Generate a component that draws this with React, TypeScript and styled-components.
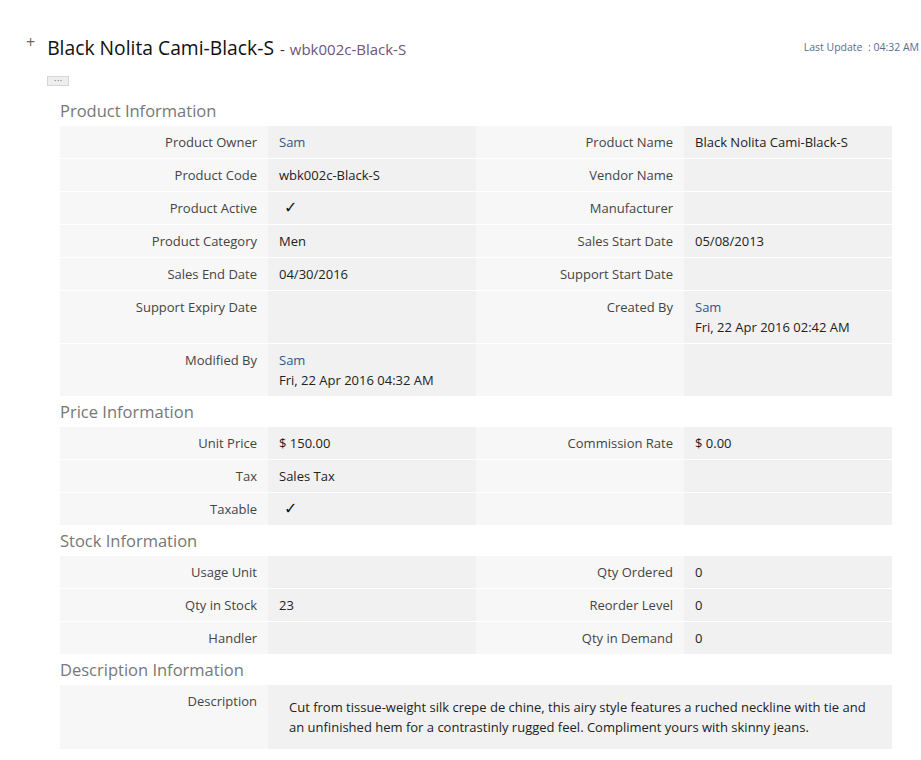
import React from 'react';
import styled, { createGlobalStyle } from 'styled-components';

const GlobalStyle = createGlobalStyle`
  body {
    margin: 0;
    background: #fff;
    font-family: "Open Sans", "Liberation Sans", sans-serif;
    color: #222;
    overflow-x: hidden;
  }
`;

const Page = styled.div`
  padding: 33px 0 10px 0;
`;

const Header = styled.div`
  display: flex;
  align-items: flex-start;
  justify-content: space-between;
  padding-left: 26px;
`;

const TitleBlock = styled.div`
  display: flex;
  align-items: flex-start;
  gap: 12px;
`;

const Plus = styled.span`
  font-size: 16px;
  line-height: 16px;
  color: #666;
  margin-top: 1px;
`;

const TitleLine = styled.div`
  display: flex;
  align-items: baseline;
  gap: 6px;
  line-height: 30px;
`;

const Title = styled.h1`
  margin: 0;
  font-size: 19.3px;
  font-weight: 400;
  color: #111;
`;

const SubTitle = styled.span`
  font-size: 15px;
  color: #6e5579;
`;

const Dash = styled.span`
  color: #333;
  margin-right: 5px;
`;

const MoreButton = styled.button`
  display: flex;
  align-items: center;
  justify-content: center;
  width: 22px;
  height: 10px;
  margin-top: 12px;
  padding: 0;
  border: 1px solid #d6d6d6;
  background: #eeeeee;
  color: #777;
  font-size: 9px;
  line-height: 1;
  font-family: "DejaVu Sans", sans-serif;
  overflow: hidden;
`;

const LastUpdate = styled.div`
  font-size: 10.5px;
  color: #5a6c8e;
  margin-top: 7px;
  margin-right: 2px;
  white-space: pre;
`;

const Content = styled.div`
  margin: 10px 0 0 60px;
  width: 832px;
`;

const SectionTitle = styled.h2`
  margin: 0;
  font-size: 16.5px;
  font-weight: 400;
  line-height: 30px;
  color: #777;
`;

const Grid = styled.div`
  display: grid;
  grid-template-columns: 208px 208px 208px 208px;
`;

const Label = styled.div`
  background: #f7f7f7;
  border-bottom: 1px solid #fff;
  padding: 6px 11px;
  font-size: 13px;
  line-height: 20px;
  color: #444;
  text-align: right;
`;

const Value = styled.div<{ $wide?: boolean }>`
  background: #f1f1f1;
  border-bottom: 1px solid #fff;
  padding: ${p => (p.$wide ? '12px 21px' : '6px 11px')};
  font-size: 13px;
  line-height: 20px;
  color: #222;
  grid-column: ${p => (p.$wide ? 'span 3' : 'auto')};
`;

const LinkText = styled.span`
  color: #2f5587;
`;

const Check = styled.span`
  font-family: "DejaVu Sans", sans-serif;
  font-size: 16px;
  padding-left: 5px;
  color: #111;
`;

type Cell = React.ReactNode;
type Row = [string, Cell, string, Cell];

const check = <Check>✓</Check>;
const sam = <LinkText>Sam</LinkText>;

const sections: { title: string; rows: Row[] }[] = [
  {
    title: 'Product Information',
    rows: [
      ['Product Owner', sam, 'Product Name', 'Black Nolita Cami-Black-S'],
      ['Product Code', 'wbk002c-Black-S', 'Vendor Name', ''],
      ['Product Active', check, 'Manufacturer', ''],
      ['Product Category', 'Men', 'Sales Start Date', '05/08/2013'],
      ['Sales End Date', '04/30/2016', 'Support Start Date', ''],
      [
        'Support Expiry Date',
        '',
        'Created By',
        <>
          {sam}
          <br />
          Fri, 22 Apr 2016 02:42 AM
        </>,
      ],
      [
        'Modified By',
        <>
          {sam}
          <br />
          Fri, 22 Apr 2016 04:32 AM
        </>,
        '',
        '',
      ],
    ],
  },
  {
    title: 'Price Information',
    rows: [
      ['Unit Price', '$ 150.00', 'Commission Rate', '$ 0.00'],
      ['Tax', 'Sales Tax', '', ''],
      ['Taxable', check, '', ''],
    ],
  },
  {
    title: 'Stock Information',
    rows: [
      ['Usage Unit', '', 'Qty Ordered', '0'],
      ['Qty in Stock', '23', 'Reorder Level', '0'],
      ['Handler', '', 'Qty in Demand', '0'],
    ],
  },
];

export default function App() {
  return (
    <Page>
      <GlobalStyle />
      <Header>
        <TitleBlock>
          <Plus>+</Plus>
          <div>
            <TitleLine>
              <Title>Black Nolita Cami-Black-S</Title>
              <SubTitle>
                <Dash>-</Dash>wbk002c-Black-S
              </SubTitle>
            </TitleLine>
            <MoreButton>···</MoreButton>
          </div>
        </TitleBlock>
        <LastUpdate>Last Update  : 04:32 AM</LastUpdate>
      </Header>

      <Content>
        {sections.map(section => (
          <div key={section.title}>
            <SectionTitle>{section.title}</SectionTitle>
            <Grid>
              {section.rows.map((row, i) => (
                <React.Fragment key={i}>
                  <Label>{row[0]}</Label>
                  <Value>{row[1]}</Value>
                  <Label>{row[2]}</Label>
                  <Value>{row[3]}</Value>
                </React.Fragment>
              ))}
            </Grid>
          </div>
        ))}

        <SectionTitle>Description Information</SectionTitle>
        <Grid>
          <Label>Description</Label>
          <Value $wide>
            Cut from tissue-weight silk crepe de chine, this airy style features a ruched neckline with tie and
            an unfinished hem for a contrastinly rugged feel. Compliment yours with skinny jeans.
          </Value>
        </Grid>
      </Content>
    </Page>
  );
}
